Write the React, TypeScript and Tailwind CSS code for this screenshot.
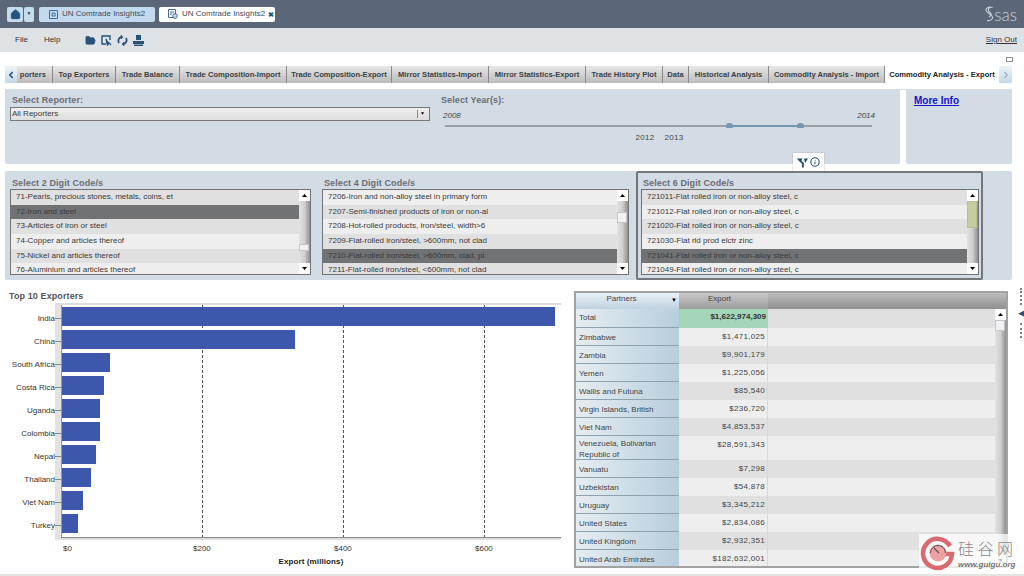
import React from 'react';
import { ChevronLeft, ChevronRight, Home, FolderOpen, Info } from 'lucide-react';

const tabs = [
  { label: 'Trade Balance', w: 64 },
  { label: 'Trade Composition-Import', w: 107 },
  { label: 'Trade Composition-Export', w: 105 },
  { label: 'Mirror Statistics-Import', w: 97 },
  { label: 'Mirror Statistics-Export', w: 97 },
  { label: 'Trade History Plot', w: 77 },
  { label: 'Data', w: 26 },
  { label: 'Historical Analysis', w: 80 },
  { label: 'Commodity Analysis - Import', w: 116 },
];

const list2 = ['71-Pearls, precious stones, metals, coins, et', '72-Iron and steel', '73-Articles of iron or steel', '74-Copper and articles thereof', '75-Nickel and articles thereof', '76-Aluminium and articles thereof'];
const list4 = ['7206-Iron and non-alloy steel in primary form', '7207-Semi-finished products of iron or non-al', '7208-Hot-rolled products, iron/steel, width>6', '7209-Flat-rolled iron/steel, >600mm, not clad', '7210-Flat-rolled iron/steel, >600mm, clad, pl', '7211-Flat-rolled iron/steel, <600mm, not clad'];
const list6 = ['721011-Flat rolled iron or non-alloy steel, c', '721012-Flat rolled iron or non-alloy steel, c', '721020-Flat rolled iron or non-alloy steel, c', '721030-Flat rld prod elctr zinc', '721041-Flat rolled iron or non-alloy steel, c', '721049-Flat rolled iron or non-alloy steel, c'];

const bars = [
  { name: 'India', w: 493 },
  { name: 'China', w: 233 },
  { name: 'South Africa', w: 48 },
  { name: 'Costa Rica', w: 42 },
  { name: 'Uganda', w: 38 },
  { name: 'Colombia', w: 38 },
  { name: 'Nepal', w: 34 },
  { name: 'Thailand', w: 29 },
  { name: 'Viet Nam', w: 21 },
  { name: 'Turkey', w: 16 },
];

const partners = [
  { name: 'Zimbabwe', v: '$1,471,025' },
  { name: 'Zambia', v: '$9,901,179' },
  { name: 'Yemen', v: '$1,225,056' },
  { name: 'Wallis and Futuna', v: '$85,540' },
  { name: 'Virgin Islands, British', v: '$236,720' },
  { name: 'Viet Nam', v: '$4,853,537' },
  { name: 'Venezuela, Bolivarian Republic of', v: '$28,591,343', tall: true },
  { name: 'Vanuatu', v: '$7,298' },
  { name: 'Uzbekistan', v: '$54,878' },
  { name: 'Uruguay', v: '$3,345,212' },
  { name: 'United States', v: '$2,834,086' },
  { name: 'United Kingdom', v: '$2,932,351' },
  { name: 'United Arab Emirates', v: '$182,632,001' },
];

const PanelLabel = ({ children }: { children: React.ReactNode }) => (
  <div className="pl-[2px] text-[9px] leading-[12px] font-bold tracking-[0.1px] text-[#6a6e74]">{children}</div>
);

const ScrollBar = ({ thumbTop, thumbH, olive }: { thumbTop: number; thumbH: number; olive?: boolean }) => (
  <div className="relative flex w-[11px] shrink-0 flex-col justify-between bg-gradient-to-r from-[#e2e2e2] via-[#cfcfcf] to-[#8f8f8f]">
    <div className="flex h-[11px] items-center justify-center bg-white">
      <svg width="5" height="3" viewBox="0 0 5 3"><path d="M2.500 0L5 3H0z" fill="#000" /></svg>
    </div>
    <div
      className={`absolute left-0 w-[10px] border ${olive ? 'border-[#b9bf94] bg-[#c6cba0]' : 'border-[#c4c8cc] bg-[#f1f1f1]'}`}
      style={{ top: thumbTop, height: thumbH }}
    />
    <div className="flex h-[11px] items-center justify-center bg-white">
      <svg width="5" height="3" viewBox="0 0 5 3"><path d="M0 0h5L2.500 3z" fill="#000" /></svg>
    </div>
  </div>
);

const ListBox = ({ items, selected, startLight, thumbTop, thumbH, olive }: { items: string[]; selected: number; startLight?: boolean; thumbTop: number; thumbH: number; olive?: boolean }) => (
  <div className="flex h-[86px] flex-1 overflow-hidden border border-[#6f7276]">
    <div className="flex-1 overflow-hidden">
      {items.map((item, i) => {
        const light = startLight ? i % 2 === 0 : i % 2 === 1;
        const bg = i === selected ? 'bg-[#707274]' : light ? 'bg-[#eeeeee]' : 'bg-[#e0e0e0]';
        return (
          <div key={item} className={`h-[14.7px] pl-[5px] text-[8px] leading-[14.7px] whitespace-nowrap text-[#3a3a3a] ${bg}`}>
            {item}
          </div>
        );
      })}
    </div>
    <ScrollBar thumbTop={thumbTop} thumbH={thumbH} olive={olive} />
  </div>
);

const SasLogo = () => (
  <div className="flex items-center text-[#c9d0d9]">
    <svg width="9" height="16" viewBox="0 0 9 16" fill="none" stroke="currentColor" strokeWidth="1.1">
      <path d="M7.500 1.500 C3.500 0.500 0.500 2 1 4.500 C1.500 7 7 8 7.500 11 C7.800 13.500 5 15 2 14.500" />
      <path d="M5 1 C2.500 3 3 5 5 6.500 C7 8 6 10 4 11" />
    </svg>
    <span className="font-['Lato',sans-serif] text-[17px] leading-none font-light">sas</span>
  </div>
);

const MenuIcons = () => (
  <div className="ml-[25px] flex items-center gap-[5px] text-[#27527c]">
    <FolderOpen size={11} fill="currentColor" strokeWidth={1.5} />
    <svg width="11" height="11" viewBox="0 0 11 11" fill="none" stroke="currentColor" strokeWidth="1.4">
      <path d="M9 5V1H1v8h4" />
      <path d="M5 4l1.500 6 1.200-2.400L10 10" fill="currentColor" />
    </svg>
    <svg width="11" height="11" viewBox="0 0 11 11" fill="none" stroke="currentColor" strokeWidth="1.8">
      <path d="M2 8C0.500 5 2 2.500 4.500 2" />
      <path d="M9 3c1.500 3 0 5.500-2.500 6" />
      <path d="M4 0l2 2-2 2z" fill="currentColor" strokeWidth="0.5" />
      <path d="M7 7l-2 2 2 2z" fill="currentColor" strokeWidth="0.5" />
    </svg>
    <svg width="11" height="11" viewBox="0 0 11 11" fill="currentColor">
      <path d="M3 0h5v5H3z" />
      <path d="M0 6h11v3H0zM1 9.500h9V11H1z" />
    </svg>
  </div>
);

const Watermark = () => (
  <div className="absolute top-[534px] left-[919px] flex h-[38px] w-[99px] items-center bg-white/75">
    <svg width="36" height="36" viewBox="0 0 36 36" className="ml-[1px] shrink-0">
      <path d="M30 11A14.500 14.500 0 1 0 32 19H19" fill="none" stroke="#d96b70" strokeWidth="4.500" />
      <circle cx="18" cy="18" r="8.500" fill="#eea0a2" />
      <path d="M14 13l5 5" stroke="#555" strokeWidth="1.200" />
      <path d="M10.500 18a7.500 7.500 0 0 1 15 0" fill="none" stroke="#555" strokeWidth="1" />
    </svg>
    <div className="ml-[2px] flex flex-col items-start">
      <span className="h-[24px] font-['Noto_Sans_CJK_SC',sans-serif] text-[16px] leading-[24px] font-light tracking-[3.500px] text-[#8a8a8a]">硅谷网</span>
      <span className="h-[10px] text-[8px] leading-[10px] font-bold text-[#777] italic">www.guigu.org</span>
    </div>
  </div>
);

const Chart = () => (
  <div className="flex h-[280px] w-[566px] flex-col">
    <div className="ml-[9px] h-[13px] text-[9px] leading-[12px] font-bold tracking-[0.1px] text-[#555]">Top 10 Exporters</div>
    <div className="flex">
      <div className="flex w-[55px] shrink-0 flex-col pt-[4px]">
        {bars.map(b => (
          <div key={b.name} className="flex h-[23px] items-center justify-end text-[8px] text-[#333]">{b.name}</div>
        ))}
      </div>
      <div className="flex h-[237px] w-[6px] shrink-0 flex-col bg-[#e2e2e2] pt-[4px]">
        {bars.map(b => (
          <div key={b.name} className="flex h-[23px] items-center"><span className="h-px w-full bg-[#888]" /></div>
        ))}
      </div>
      <div className="relative h-[237px] w-[500px] border-t-2 border-b-2 border-[#dedede] pt-[2px]">
        <div className="absolute top-0 bottom-0 left-[141px] border-l border-dashed border-[#555]" />
        <div className="absolute top-0 bottom-0 left-[282px] border-l border-dashed border-[#555]" />
        <div className="absolute top-0 bottom-0 left-[423px] border-l border-dashed border-[#555]" />
        <div className="absolute top-0 bottom-0 left-0 w-px bg-[#999]" />
        <div className="absolute right-0 bottom-0 left-0 h-px bg-[#888]" />
        <div className="relative flex flex-col gap-[4px] pl-[1px]">
          {bars.map(b => (
            <div key={b.name} className="h-[19px] bg-[#3c57ab]" style={{ width: b.w }} />
          ))}
        </div>
      </div>
    </div>
    <div className="relative mt-[3px] ml-[62px] h-[12px] text-[8px] leading-[12px] text-[#333]">
      <span className="absolute left-[1px]">$0</span>
      <span className="absolute left-[131px]">$200</span>
      <span className="absolute left-[272px]">$400</span>
      <span className="absolute left-[413px]">$600</span>
    </div>
    <div className="mt-[1px] ml-[62px] w-[498px] text-center text-[8px] leading-[12px] font-bold tracking-[0.1px] text-[#222]">Export (millions)</div>
  </div>
);

const Table = () => (
  <div className="flex h-[277px] w-[434px] flex-col overflow-hidden border-2 border-[#a2a2a2] text-[8px] text-[#444]">
    <div className="flex h-[16px] shrink-0">
      <div className="relative w-[103px] bg-gradient-to-b from-[#eaf1f5] to-[#bfd2e0] pr-[12px] text-center leading-[11px]">
        Partners
        <span className="absolute top-[4px] right-[2px] text-[6px] leading-[7px] text-black">▼</span>
      </div>
      <div className="w-[89px] bg-gradient-to-b from-[#c9c9c9] to-[#9d9d9d] pr-[8px] text-center leading-[11px]">Export</div>
      <div className="flex-1 bg-gradient-to-b from-[#bdbdbd] to-[#8f8f8f]" />
    </div>
    <div className="flex min-h-0 flex-1">
      <div className="flex w-[103px] shrink-0 flex-col">
        <div className="h-[18.500px] border-b border-[#8fa2b0] bg-gradient-to-r from-[#e6edf1] to-[#b7cedd] pl-[3px] leading-[18px]">Total</div>
        {partners.map(p => (
          <div key={p.name} className={`${p.tall ? 'h-[24.500px] pt-[2px] leading-[11px]' : 'h-[18px] leading-[19px]'} border-b border-[#8fa2b0] bg-gradient-to-r from-[#e6edf1] to-[#b7cedd] pl-[3px]`}>
            {p.name}
          </div>
        ))}
      </div>
      <div className="min-w-0 flex-1 flex-col">
        <div className="flex h-[18.500px] bg-[#e0e0e0]">
          <div className="w-[89px] bg-[#a3d5b8] pr-[2px] text-right leading-[16px] font-bold text-[#333]">$1,622,974,309</div>
        </div>
        {partners.map((p, i) => (
          <div key={p.name} className={`flex ${p.tall ? 'h-[24.500px]' : 'h-[18px]'} ${i % 2 === 0 ? 'bg-[#eeeeee]' : 'bg-[#e0e0e0]'}`}>
            <div className="w-[89px] border-r border-[#d8d8d8] pr-[2px] text-right leading-[17px] tracking-[0.3px]">{p.v}</div>
          </div>
        ))}
      </div>
      <ScrollBar thumbTop={11} thumbH={11} />
    </div>
  </div>
);

export default function App() {
  return (
    <div className="relative flex h-[576px] w-[1024px] flex-col overflow-hidden bg-white font-['Liberation_Sans',Arial,sans-serif]">
      {/* top bar */}
      <div className="flex h-[28px] shrink-0 items-center bg-[#5b6779] pr-[7px] pl-[7px]">
        <div className="flex h-[15px] w-[16px] items-center justify-center rounded-[2px] bg-[#c5dcef] text-[#27527c]">
          <Home size={11} fill="currentColor" />
        </div>
        <div className="ml-[1px] flex h-[15px] w-[10px] items-center justify-center rounded-[2px] bg-[#c5dcef] text-[5px] text-[#333]">▼</div>
        <div className="ml-[5px] flex h-[15px] w-[116px] items-center rounded-[2px] bg-[#c3daee] pl-[10px] text-[8px] whitespace-nowrap text-[#3d4b5c]">
          <svg width="9" height="9" viewBox="0 0 9 9" fill="none" stroke="#3d6c97" className="mr-[4px] shrink-0"><path d="M0.500 0.500h8v8h-8zM3 3h3v3H3z" /></svg>
          UN Comtrade Insights2
        </div>
        <div className="ml-[4px] flex h-[15px] w-[116px] items-center rounded-[2px] bg-white pl-[9px] text-[8px] whitespace-nowrap text-[#3d4b5c]">
          <svg width="10" height="10" viewBox="0 0 10 10" fill="none" stroke="#3d6c97" className="mr-[4px] shrink-0"><path d="M0.500 0.500h7v8h-7zM2 3h4M2 5h2" /><circle cx="7" cy="7" r="2.300" fill="#c3daee" /></svg>
          UN Comtrade Insights2
          <span className="ml-[3px] text-[7px] leading-none font-bold text-[#27527c]">✖</span>
        </div>
        <div className="ml-auto"><SasLogo /></div>
      </div>

      {/* menu */}
      <div className="flex h-[24px] shrink-0 items-center bg-[#dfe2e5] pr-[7px] pl-[15px] text-[8px] text-[#333]">
        <span>File</span>
        <span className="ml-[16px]">Help</span>
        <MenuIcons />
        <span className="ml-auto underline">Sign Out</span>
      </div>

      <div className="flex h-[14px] shrink-0 items-center justify-end pr-[11px]">
        <span className="h-[5px] w-[7px] border border-[#8a9096]" />
      </div>

      {/* tabs */}
      <div className="ml-[5px] flex h-[17px] w-[1007px] shrink-0 text-[7.6px] font-bold text-[#3a3f45]">
        <div className="flex w-[12px] items-center justify-center bg-gradient-to-b from-[#eef4f8] to-[#c6d9e6] text-[#27527c]"><ChevronLeft size={10} strokeWidth={4} /></div>
        <div className="flex w-[36px] items-center justify-end overflow-hidden border-r border-[#888] bg-gradient-to-b from-[#e8e8e8] to-[#bcbcbc] pr-[6px]">porters</div>
        <div className="flex w-[63px] items-center justify-center border-r border-[#888] bg-gradient-to-b from-[#e8e8e8] to-[#bcbcbc] whitespace-nowrap">Top Exporters</div>
        {tabs.map(t => (
          <div key={t.label} className="flex items-center justify-center border-r border-[#888] bg-gradient-to-b from-[#e8e8e8] to-[#bcbcbc] whitespace-nowrap" style={{ width: t.w }}>{t.label}</div>
        ))}
        <div className="flex w-[114px] items-center justify-center bg-white whitespace-nowrap text-[#222]">Commodity Analysis - Export</div>
        <div className="flex w-[13px] items-center justify-center bg-gradient-to-b from-[#eef4f8] to-[#c6d9e6] text-[#9fb7cc]"><ChevronRight size={10} strokeWidth={4} /></div>
      </div>

      <div className="mt-[6px] ml-[5px] h-px w-[1007px] shrink-0 bg-[#d5dde6]" />

      {/* reporter + years */}
      <div className="ml-[5px] flex h-[74px] w-[1007px] shrink-0 gap-[6px]">
        <div className="flex w-[895px] rounded-b-[2px] bg-[#d3dbe5] pt-[4px]">
          <div className="ml-[5px] w-[420px]">
            <PanelLabel>Select Reporter:</PanelLabel>
            <div className="mt-[1px] flex h-[14px] items-center justify-between border border-[#777] bg-gradient-to-b from-[#efefef] to-[#dedede] pr-[2px] pl-[1px] text-[8px] text-[#3a3a3a]">
              All Reporters
              <span className="border-l border-[#888] pr-[2px] pl-[2px] text-[5px] text-black">▼</span>
            </div>
          </div>
          <div className="relative ml-[11px] w-[436px]">
            <div className="-ml-[2px]"><PanelLabel>Select Year(s):</PanelLabel></div>
            <div className="mt-[4px] flex justify-between pr-[2px] pl-[2px] text-[8px] leading-[12px] text-[#444] italic"><span>2008</span><span>2014</span></div>
            <div className="relative mt-[3px] ml-[4px] h-[2px] w-[427px] bg-[#9a9fa5]">
              <div className="absolute left-[284px] h-[2px] w-[71px] bg-[#7396b2]" />
              <span className="absolute -top-[2px] left-[281px] h-[5px] w-[7px] rounded-t-[3px] bg-[#7a98ad]" />
              <span className="absolute -top-[2px] left-[352px] h-[5px] w-[7px] rounded-t-[3px] bg-[#7a98ad]" />
            </div>
            <div className="mt-[5px] flex justify-center gap-[10px] pl-[1px] text-[8px] leading-[12px] tracking-[0.3px] text-[#444]"><span>2012</span><span>2013</span></div>
          </div>
        </div>
        <div className="flex-1 rounded-b-[2px] bg-[#d3dbe5] pt-[5px] pl-[8px]">
          <div className="text-[10px] leading-[12px] font-bold text-[#1414c8] underline">More Info</div>
        </div>
      </div>

      {/* code lists */}
      <div className="relative mt-[7px] ml-[5px] flex h-[109px] w-[1007px] shrink-0 rounded-[2px] bg-[#d3dbe5]">
        <div className="ml-[5px] w-[301px] pt-[6px]">
          <PanelLabel>Select 2 Digit Code/s</PanelLabel>
          <div className="flex"><ListBox items={list2} selected={1} thumbTop={54} thumbH={7} /></div>
        </div>
        <div className="ml-[11px] w-[307px] pt-[6px]">
          <PanelLabel>Select 4 Digit Code/s</PanelLabel>
          <div className="flex"><ListBox items={list4} selected={4} startLight thumbTop={22} thumbH={11} /></div>
        </div>
        <div className="ml-[7px] h-[109px] w-[347px] rounded-[2px] border-2 border-[#74787d] pt-[4px] pl-[3px]">
          <PanelLabel>Select 6 Digit Code/s</PanelLabel>
          <div className="flex w-[338px]"><ListBox items={list6} selected={4} thumbTop={11} thumbH={27} olive /></div>
        </div>
        <div className="absolute -top-[18px] left-[788px] flex h-[18px] w-[31px] items-center justify-center gap-[2px] bg-white text-[#1f4a6b] shadow-[0_0_1px_#888]">
          <svg width="11" height="11" viewBox="0 0 11 11" fill="currentColor"><path d="M0 1.500h5.500L4.500 4 6.800 6v4.500H5V6.800L2 4zM7 1.500h4L8 6z" /></svg>
          <Info size={10} strokeWidth={2.500} />
        </div>
      </div>

      {/* chart + table */}
      <div className="mt-[10px] flex h-[280px] shrink-0">
        <Chart />
        <div className="ml-[8px] pt-[1px]"><Table /></div>
        <div className="ml-[10px] flex w-[6px] flex-col items-center text-[#27527c]">
          <span className="mt-[-2px] h-[17px] border-l-2 border-dotted border-[#7b8186]" />
          <span className="mt-[3px] text-[9px] leading-[10px]">◀</span>
          <span className="mt-[5px] h-[15px] border-l-2 border-dotted border-[#7b8186]" />
        </div>
      </div>
      <div className="mt-[4px] h-[2px] shrink-0 bg-[#e4e4e0]" />

      <Watermark />
    </div>
  );
}
